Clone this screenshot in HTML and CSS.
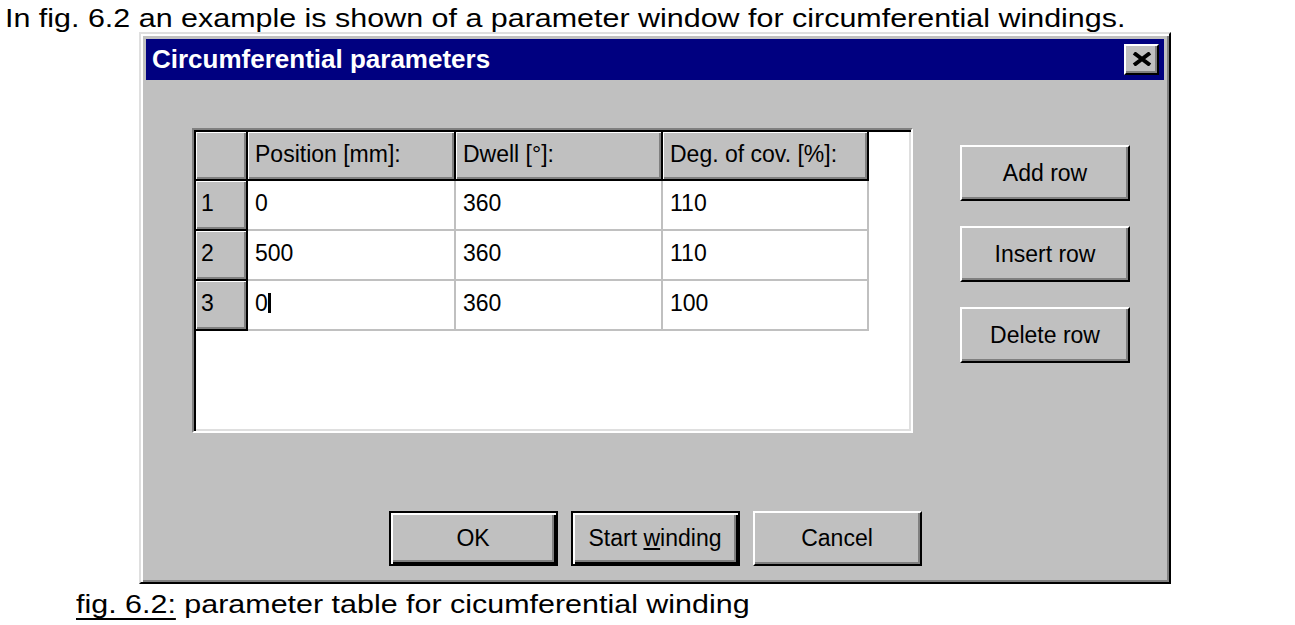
FILE: index.html
```html
<!DOCTYPE html>
<html lang="en">
<head>
<meta charset="utf-8">
<title>Circumferential parameters</title>
<link rel="stylesheet" href="styles.css">
</head>
<body>
<p class="intro">In fig. 6.2 an example is shown of a parameter window for circumferential windings.</p>
<div class="window">
  <div class="titlebar">
    <span class="title">Circumferential parameters</span>
    <button class="close" aria-label="Close">
      <svg width="20" height="14" viewBox="0 0 20 14"><path d="M2 1 L18 13 M18 1 L2 13" stroke="#000" stroke-width="4" fill="none"/></svg>
    </button>
  </div>
  <div class="body">
    <div class="top">
      <div class="grid">
        <div class="hd"></div>
        <div class="hd">Position [mm]:</div>
        <div class="hd">Dwell [°]:</div>
        <div class="hd">Deg. of cov. [%]:</div>
        <div class="blank"></div>

        <div class="rh">1</div>
        <div class="cell">0</div>
        <div class="cell">360</div>
        <div class="cell">110</div>
        <div class="blank"></div>

        <div class="rh">2</div>
        <div class="cell">500</div>
        <div class="cell">360</div>
        <div class="cell">110</div>
        <div class="blank"></div>

        <div class="rh">3</div>
        <div class="cell">0<span class="caret"></span></div>
        <div class="cell">360</div>
        <div class="cell">100</div>
        <div class="blank"></div>
      </div>
      <div class="side">
        <button class="btn">Add row</button>
        <button class="btn">Insert row</button>
        <button class="btn">Delete row</button>
      </div>
    </div>
    <div class="bottom">
      <button class="btn btn-default">OK</button>
      <button class="btn btn-default">Start <u>w</u>inding</button>
      <button class="btn">Cancel</button>
    </div>
  </div>
</div>
<p class="caption"><span class="fig-ref">fig. 6.2:</span> parameter table for cicumferential winding</p>
</body>
</html>
```

FILE: styles.css
```css
body {
  margin: 0;
  background: #fff;
  color: #000;
  font-family: "Liberation Sans", Arial, sans-serif;
}

.intro {
  width: max-content;
  margin: 4px 0 0 5px;
  font-size: 25px;
  line-height: 28px;
  white-space: nowrap;
  transform: scaleX(1.218);
  transform-origin: left center;
}

.window {
  margin-left: 139px;
  width: 1032px;
  height: 552px;
  box-sizing: border-box;
  background: #c0c0c0;
  border: 2px solid;
  border-color: #dfdfdf #000 #000 #dfdfdf;
  box-shadow: inset 2px 2px #fff, inset -2px -2px #808080;
  padding: 5px;
  display: flex;
  flex-direction: column;
}

.titlebar {
  height: 41px;
  background: #000080;
  display: flex;
  justify-content: space-between;
  align-items: flex-start;
  padding-left: 6px;
}

.title {
  color: #fff;
  font-weight: bold;
  font-size: 26px;
  line-height: 41px;
  white-space: nowrap;
}

.close {
  margin: 5px 5px 0 0;
  width: 35px;
  height: 31px;
  box-sizing: border-box;
  padding: 0;
  background: #c0c0c0;
  border: 2px solid;
  border-color: #fff #000 #000 #fff;
  box-shadow: inset -2px -2px #808080;
  display: flex;
  align-items: center;
  justify-content: center;
}

.close svg {
  display: block;
  margin-top: -1px;
}

.body {
  flex: 1;
  display: flex;
  flex-direction: column;
}

.top {
  display: flex;
  align-items: flex-start;
}

.grid {
  margin: 48px 0 0 46px;
  width: 721px;
  height: 305px;
  box-sizing: border-box;
  background: #fff;
  border: 2px solid;
  border-color: #808080 #fff #fff #808080;
  box-shadow: inset 2px 2px #000, inset -2px -2px #dfdfdf;
  padding: 2px;
  display: grid;
  grid-template-columns: 52px 208px 207px 206px 1fr;
  grid-template-rows: 49px 50px 50px 50px;
  align-content: start;
  font-size: 23px;
  white-space: nowrap;
}

.hd,
.rh {
  background: #c0c0c0;
  border-right: 2px solid #000;
  border-bottom: 2px solid #000;
  box-shadow: inset 1px 1px #fff, inset -2px -2px #808080;
}

.hd {
  padding: 0 0 3px 7px;
  line-height: 44px;
}

.rh {
  padding: 0 0 4px 5px;
  line-height: 44px;
}

.cell {
  border-right: 2px solid #c0c0c0;
  border-bottom: 2px solid #c0c0c0;
  padding: 0 0 4px 7px;
  line-height: 44px;
}

.blank {
  background: #fff;
}

.caret {
  display: inline-block;
  width: 3px;
  height: 20px;
  background: #000;
  vertical-align: -2px;
}

.side {
  margin: 65px 0 0 47px;
  display: flex;
  flex-direction: column;
  gap: 25px;
}

.btn {
  width: 170px;
  height: 56px;
  box-sizing: border-box;
  padding: 0;
  background: #c0c0c0;
  color: #000;
  font-family: "Liberation Sans", Arial, sans-serif;
  font-size: 23px;
  border: 2px solid;
  border-color: #fff #000 #000 #fff;
  box-shadow: inset -2px -2px #808080;
}

.bottom {
  margin-top: 78px;
  display: flex;
  justify-content: center;
  gap: 13px;
}

.bottom .btn {
  width: 169px;
  height: 55px;
}

.btn-default {
  border-color: #000;
  box-shadow: inset 2px 2px #fff, inset -2px -2px #000, inset -4px -4px #808080;
}

.caption {
  width: max-content;
  margin: 6px 0 0 76px;
  font-size: 25px;
  line-height: 28px;
  white-space: nowrap;
  transform: scaleX(1.218);
  transform-origin: left center;
}

.fig-ref {
  display: inline-block;
  line-height: 22px;
  padding-bottom: 3px;
  border-bottom: 2px solid #000;
}
```
